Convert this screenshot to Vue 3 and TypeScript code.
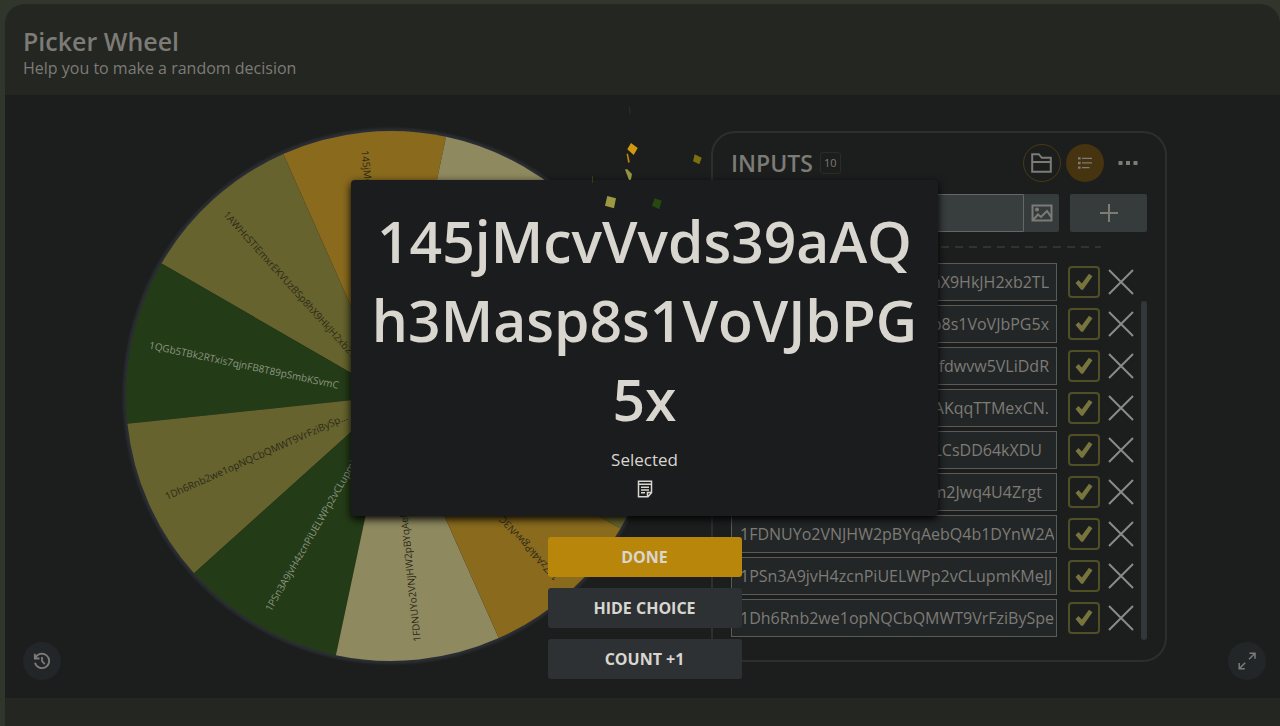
<script setup lang="ts">
import { ref } from 'vue'

interface Slice {
  mid: number
  fill: string
  ink: string
  label: string
}

interface Entry {
  value: string
  side: 'start' | 'end' | 'short'
  enabled: boolean
}

const CENTER = 270
const RADIUS = 265

const gold = '#8a6b1e'
const olive = '#66632e'
const green = '#243b17'
const khaki = '#8f895f'
const dark = '#2b2a18'
const light = '#8b9783'

const slices: Slice[] = [
  { mid: -6, fill: gold, ink: dark, label: '145jMcvVvds39aAQh3Masp8s1VoVJbPG5x' },
  { mid: -42, fill: olive, ink: dark, label: '1AWHcSTiEmxrEKVUzBSp8hX9HkJH2xb2TL' },
  { mid: -78, fill: green, ink: light, label: '1QGb5TBk2RTxis7qjnFB8T89pSmbKSvmC' },
  { mid: -114, fill: olive, ink: dark, label: '1Dh6Rnb2we1opNQCbQMWT9VrFziBySp...' },
  { mid: -150, fill: green, ink: light, label: '1PSn3A9jvH4zcnPiUELWPp2vCLupmKMeJJ' },
  { mid: -186, fill: khaki, ink: dark, label: '1FDNUYo2VNJHW2pBYqAebQ4b1DYnW2A' },
  { mid: 138, fill: gold, ink: dark, label: '1YZzA4kPgwvN3C' },
  { mid: 102, fill: olive, ink: dark, label: '' },
  { mid: 66, fill: green, ink: light, label: '' },
  { mid: 30, fill: khaki, ink: dark, label: '' },
]

function point(angle: number): string {
  const a = (angle * Math.PI) / 180
  return `${CENTER + RADIUS * Math.sin(a)} ${CENTER - RADIUS * Math.cos(a)}`
}

function wedge(mid: number): string {
  return `M${CENTER} ${CENTER} L${point(mid - 18)} A${RADIUS} ${RADIUS} 0 0 1 ${point(mid + 18)} Z`
}

const entries = ref<Entry[]>([
  { value: 'hX9HkJH2xb2TL', side: 'end', enabled: true },
  { value: 'p8s1VoVJbPG5x', side: 'end', enabled: true },
  { value: 'Ifdwvw5VLiDdR', side: 'end', enabled: true },
  { value: 'AKqqTTMexCN.', side: 'end', enabled: true },
  { value: 'LCsDD64kXDU', side: 'short', enabled: true },
  { value: 'm2Jwq4U4Zrgt', side: 'short', enabled: true },
  { value: '1FDNUYo2VNJHW2pBYqAebQ4b1DYnW2A', side: 'start', enabled: true },
  { value: '1PSn3A9jvH4zcnPiUELWPp2vCLupmKMeJJ', side: 'start', enabled: true },
  { value: '1Dh6Rnb2we1opNQCbQMWT9VrFziBySpe.', side: 'start', enabled: true },
])

const draft = ref('')
</script>

<template>
  <div class="page">
    <main class="card">
      <header class="head">
        <h1>Picker Wheel</h1>
        <p>Help you to make a random decision</p>
      </header>

      <section class="stage">
        <svg class="wheel" viewBox="0 0 540 540" aria-label="Wheel">
          <circle class="rim" cx="270" cy="270" r="265" />
          <path v-for="s in slices" :key="s.mid" :d="wedge(s.mid)" :fill="s.fill" />
          <text
            v-for="s in slices"
            :key="'t' + s.mid"
            :fill="s.ink"
            x="-247"
            y="4"
            :transform="`translate(270 270) rotate(${s.mid + 90})`"
          >{{ s.label }}</text>
        </svg>

        <section class="panel">
          <div class="panel-head">
            <h2>INPUTS</h2>
            <span class="count">10</span>
            <div class="tools">
              <button class="tool outline" type="button" aria-label="Open list">
                <svg viewBox="0 0 24 24" width="24" height="24"><path d="M2.200 20.800V3.200h6.600l3 3.600h9v14zM2.200 11h18.600" /></svg>
              </button>
              <button class="tool filled" type="button" aria-label="List mode">
                <svg class="solid" viewBox="0 0 16 16" width="16" height="16"><path d="M1 2.2h2.6v2.400H1zM1 6.800h2.600v2.400H1zM1 11.400h2.600v2.400H1zM5 2.800h10v1.300H5zM5 7.300h10v1.300H5zM5 11.900h7.500v1.300H5z" /></svg>
              </button>
              <button class="tool" type="button" aria-label="More">
                <svg class="solid" viewBox="0 0 20 20" width="20" height="20"><path d="M.5 8h4v4h-4zM8 8h4v4H8zM15.500 8h4v4h-4z" /></svg>
              </button>
            </div>
          </div>

          <div class="adder">
            <input v-model="draft" class="draft" type="text" aria-label="New input" />
            <button class="image" type="button" aria-label="Add image">
              <svg viewBox="0 0 22 20" width="22" height="20"><path d="M1.500 2.500h19v15h-19zM2 17l5-5.500 3 2.500 6-6 4.500 6.500" /><circle cx="6" cy="6.500" r="1" /></svg>
            </button>
            <button class="plus" type="button" aria-label="Add">
              <svg viewBox="0 0 20 20" width="20" height="20"><path d="M10 1v18M1 10h18" /></svg>
            </button>
          </div>

          <div class="divider"></div>

          <div class="list-area">
            <ul>
              <li v-for="(e, i) in entries" :key="i">
                <input v-model="e.value" :class="['value', e.side]" type="text" :aria-label="`Input ${i + 1}`" />
                <label class="tick">
                  <input v-model="e.enabled" type="checkbox" :aria-label="`Enable ${i + 1}`" />
                  <svg v-show="e.enabled" viewBox="0 0 18 18" width="18" height="18"><path d="M.5 10l3-3 3.300 3.500L14 .8l3.500 2.400-9.500 13.500h-1.800z" /></svg>
                </label>
                <button class="remove" type="button" :aria-label="`Remove ${i + 1}`">
                  <svg viewBox="0 0 26 26" width="26" height="26"><path d="M1 1l24 24M25 1L1 25" /></svg>
                </button>
              </li>
            </ul>
            <div class="scroll"></div>
          </div>
        </section>

        <button class="round history" type="button" aria-label="History">
          <svg viewBox="0 0 20 20" width="18" height="18"><path d="M2 2v5.200h5.200M2.500 7A8 8 0 1 1 2.200 12M10 5.500V10l3 3.500" /></svg>
        </button>
        <button class="round expand" type="button" aria-label="Full screen">
          <svg viewBox="0 0 20 20" width="20" height="20"><path d="M12.500 2.200h5.500v5.500M18 2.200l-6 6M2.200 12v5.800h5.600M2.200 17.800l6-6" /></svg>
        </button>
      </section>
    </main>

    <div class="overlay">
      <div class="dialog" role="dialog" aria-label="Result">
        <p class="result">145jMcvVvds39aAQh3Masp8s1VoVJbPG5x</p>
        <p class="selected">Selected</p>
        <button class="note" type="button" aria-label="Note">
          <svg viewBox="0 0 16 18" width="16" height="18"><path d="M1.500 1.300h13v11.500l-3.500 3.900H1.500zM1.500 4.300h13M4 7.200h8M4 10h8M4 12.800h4M10.500 16.500v-4h4" /></svg>
        </button>
        <svg class="confetti" viewBox="0 0 130 115" width="130" height="115" aria-hidden="true">
          <path fill="#2d3416" d="M49 7h1l.5 7h-1z" />
          <path fill="#d2980f" d="M51 43l6.700 5-4 7-6.400-5.700z" />
          <path fill="#b8860b" d="M46.500 54l1.500-.5 1.800 8.500-1.600 1z" />
          <path fill="#959241" d="M45 69.500l2-.5 5 5-1 5.500-2 .5z" />
          <path fill="#7b6e10" d="M114.700 54.300l7 3.400-2.400 6.600-6.300-3z" />
          <path fill="#9d9941" d="M27.300 96l8.700 2.300-2 10-9-2.600z" />
          <path fill="#26490f" d="M74.700 98.300l7 2.400-2.400 8.600-7.300-3.600z" />
          <path fill="#294115" d="M12 76h1v7h-1z" />
        </svg>
      </div>
      <button class="action primary" type="button">DONE</button>
      <button class="action" type="button">HIDE CHOICE</button>
      <button class="action" type="button">COUNT +1</button>
    </div>
  </div>
</template>

<style>
body {
  margin: 0;
  background: #30362c;
}
</style>

<style scoped>
.page,
.page * {
  box-sizing: border-box;
}
.page {
  position: relative;
  display: flex;
  min-height: 100vh;
  padding: 4px 0 0 5px;
  font-family: 'Open Sans', 'Noto Sans', sans-serif;
  font-size: 16px;
  color: #7d7b76;
  overflow: hidden;
}
h1,
h2,
p,
ul {
  margin: 0;
  padding: 0;
}
button,
input {
  margin: 0;
  padding: 0;
  border: 0;
  font: inherit;
  color: inherit;
  background: none;
}
button {
  display: flex;
  align-items: center;
  justify-content: center;
  cursor: pointer;
}
svg {
  display: block;
  fill: none;
  stroke: currentColor;
}
svg.solid {
  fill: currentColor;
  stroke: none;
}
.card {
  flex: 1;
  border-radius: 20px 20px 0 0;
  background: #242622;
}
.head {
  padding: 21px 18px 16px;
}
.head h1 {
  font-size: 25px;
  line-height: 32px;
  font-weight: 600;
}
.head p {
  font-size: 16px;
  line-height: 22px;
}
.stage {
  position: relative;
  display: flex;
  justify-content: center;
  align-items: center;
  gap: 50px;
  padding: 31px 0 32px 3px;
  background: #1c1e1d;
}
.wheel {
  width: 540px;
  height: 540px;
}
.wheel path,
.wheel text {
  stroke: none;
}
.wheel text {
  font-size: 10px;
}
.rim {
  stroke: #2a2d33;
  stroke-width: 6;
  filter: blur(1px);
}
.panel {
  width: 456px;
  padding: 11px 18px 23px;
  border: 2px solid #2c2e30;
  border-radius: 24px;
}
.panel-head {
  display: flex;
  align-items: center;
  height: 39px;
}
.panel-head h2 {
  font-size: 23px;
  line-height: 32px;
  font-weight: 600;
}
.count {
  margin-left: 7px;
  padding: 0 3px;
  border: 1px solid #292b2c;
  border-radius: 3px;
  font-size: 11px;
  line-height: 20px;
}
.tools {
  display: flex;
  gap: 5px;
  margin-left: auto;
}
.tool {
  width: 38px;
  height: 38px;
  border-radius: 50%;
}
.outline {
  border: 1px solid #4a3910;
}
.outline svg {
  stroke-width: 2;
}
.filled {
  background: #46330f;
}
.adder {
  display: grid;
  grid-template-columns: 1fr 35px 88px;
  height: 38px;
  margin-top: 11px;
}
.draft {
  min-width: 0;
  padding: 0 8px;
  border: 1px solid #646864;
  border-radius: 2px 0 0 2px;
  background: #383d3d;
}
.image,
.plus {
  background: #363b3c;
}
.image {
  border-radius: 0 2px 2px 0;
}
.image svg {
  stroke-width: 2;
}
.plus {
  margin-left: 11px;
  border-radius: 2px;
}
.plus svg {
  stroke-width: 2;
}
.divider {
  height: 2px;
  margin: 14px 46px 15px 0;
  background: repeating-linear-gradient(90deg, #313333 0 8px, transparent 8px 14px);
}
.list-area {
  display: flex;
  justify-content: space-between;
}
ul {
  display: flex;
  flex-direction: column;
  gap: 4px;
  flex: 1;
  list-style: none;
}
li {
  display: flex;
  align-items: center;
}
.value {
  width: 326px;
  height: 38px;
  padding: 0 7px 0 8px;
  border: 1px solid #5a5a57;
  background: #232627;
}
.start {
  padding-right: 2px;
}
.end,
.short {
  text-align: right;
}
.short {
  padding-right: 14px;
}
.tick {
  position: relative;
  width: 32px;
  height: 32px;
  margin-left: 11px;
}
.tick input {
  display: block;
  width: 32px;
  height: 32px;
  appearance: none;
  border: 2px solid #4f4e24;
  border-radius: 4px;
}
.tick svg {
  position: absolute;
  inset: 7px;
  fill: #78743d;
  stroke: none;
}
.remove {
  width: 26px;
  height: 38px;
  margin-left: 8px;
}
.remove svg {
  stroke-width: 2;
  color: #8c8a87;
}
.scroll {
  width: 6px;
  margin: 38px 0 -3px;
  border-radius: 3px;
  background: #303839;
}
.round {
  position: absolute;
  bottom: 18px;
  width: 38px;
  height: 38px;
  border-radius: 50%;
  background: #232628;
}
.history {
  left: 18px;
}
.expand {
  right: 14px;
}
.history svg {
  stroke-width: 2;
}
.expand svg {
  stroke-width: 1.5;
}
.overlay {
  position: absolute;
  inset: 0;
  display: flex;
  flex-direction: column;
  align-items: center;
  gap: 11px;
  padding: 180px 0 0 9px;
  color: #d9d6d0;
}
.dialog {
  position: relative;
  display: flex;
  flex-direction: column;
  align-items: center;
  width: 587px;
  margin-bottom: 10px;
  padding: 22px 20px 14px;
  border-radius: 4px;
  background: #1b1c1e;
  box-shadow: 0 3px 8px #000;
}
.result {
  font-size: 57px;
  line-height: 79px;
  font-weight: 600;
  text-align: center;
  word-break: break-all;
}
.selected {
  margin-top: 9px;
  font-size: 17px;
  line-height: 24px;
}
.note {
  width: 24px;
  height: 26px;
  margin-top: 4px;
}
.note svg {
  stroke-width: 1.5;
}
.confetti {
  position: absolute;
  top: -80px;
  left: 229px;
  stroke: none;
  pointer-events: none;
}
.action {
  width: 194px;
  height: 40px;
  border-radius: 3px;
  background: #2e3134;
  font-size: 16px;
  font-weight: 700;
}
.primary {
  background: #b8860b;
}
</style>
